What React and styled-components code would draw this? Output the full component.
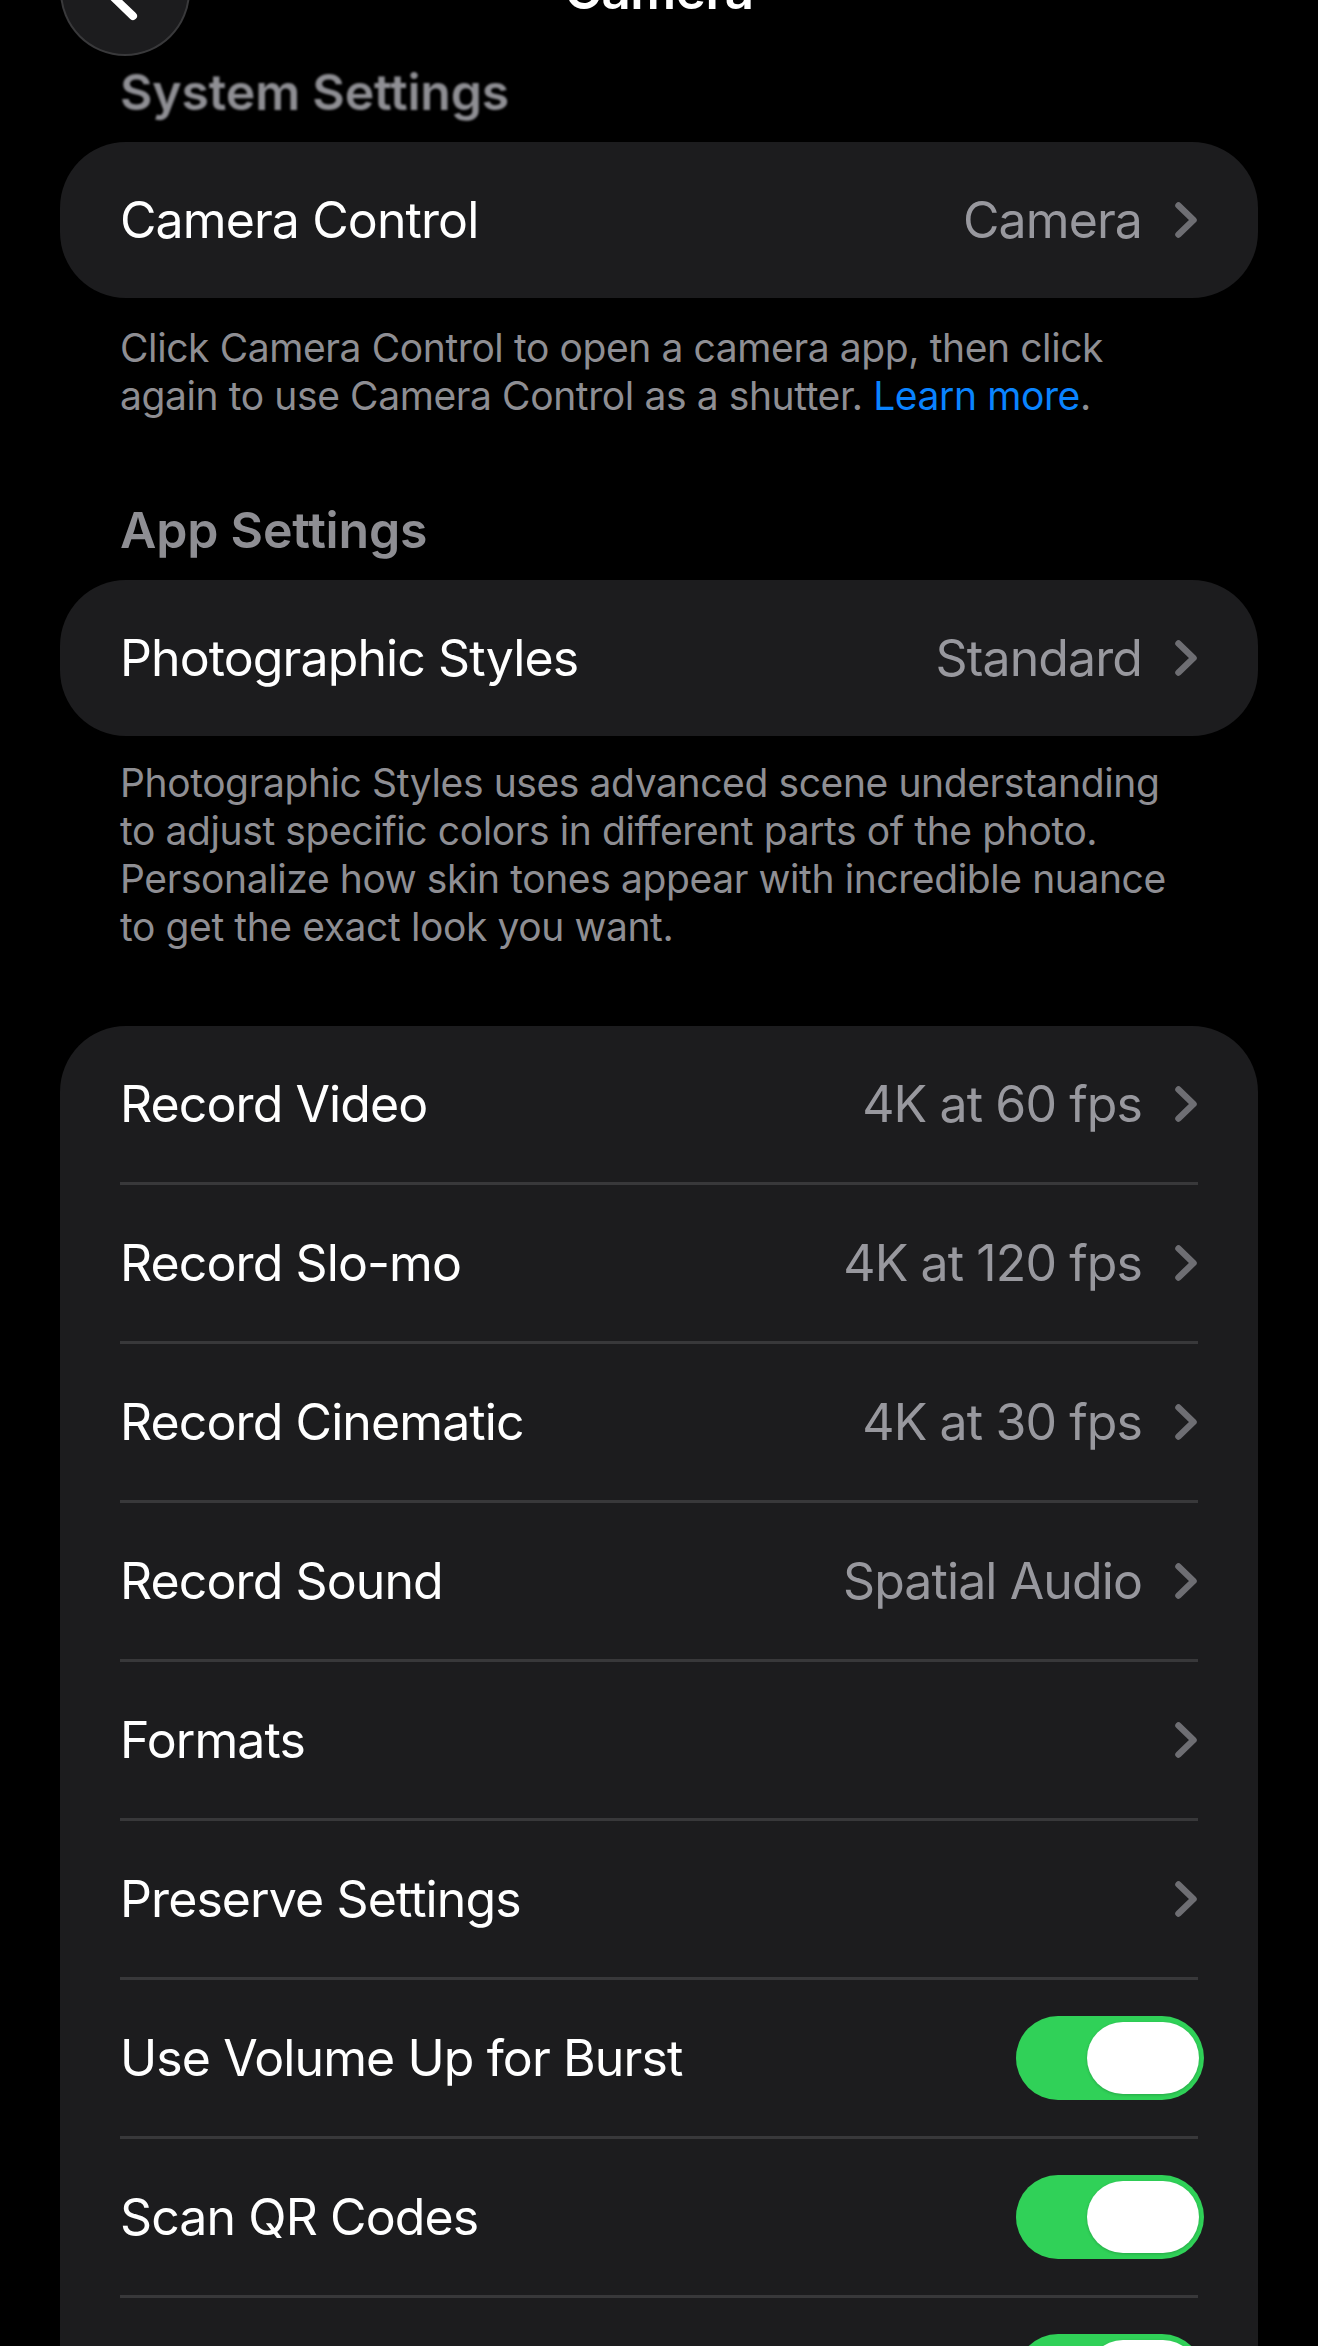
import React from "react";
import styled, { createGlobalStyle } from "styled-components";

const GlobalStyle = createGlobalStyle`
  html, body {
    margin: 0;
    padding: 0;
    background: #000;
  }
  body {
    font-family: Inter, "Noto Sans", "Liberation Sans", sans-serif;
    color: #fff;
    -webkit-font-smoothing: antialiased;
  }
`;

const sections = [
  {
    header: "System Settings",
    blurred: true,
    rows: [{ label: "Camera Control", value: "Camera", chevron: true }],
    footer: [
      "Click Camera Control to open a camera app, then click",
      "again to use Camera Control as a shutter.",
    ],
    link: "Learn more",
  },
  {
    header: "App Settings",
    rows: [{ label: "Photographic Styles", value: "Standard", chevron: true }],
    footer: [
      "Photographic Styles uses advanced scene understanding",
      "to adjust specific colors in different parts of the photo.",
      "Personalize how skin tones appear with incredible nuance",
      "to get the exact look you want.",
    ],
  },
  {
    rows: [
      { label: "Record Video", value: "4K at 60 fps", chevron: true },
      { label: "Record Slo-mo", value: "4K at 120 fps", chevron: true },
      { label: "Record Cinematic", value: "4K at 30 fps", chevron: true },
      { label: "Record Sound", value: "Spatial Audio", chevron: true },
      { label: "Formats", chevron: true },
      { label: "Preserve Settings", chevron: true },
      { label: "Use Volume Up for Burst", toggle: true },
      { label: "Scan QR Codes", toggle: true },
      { label: "Show Detected Text", toggle: true },
    ],
  },
];

const ChevronRight = () => (
  <ChevronSvg viewBox="0 0 22 36">
    <path d="M3.5 3.5 L18.5 18 L3.5 32.5" />
  </ChevronSvg>
);

const App = () => {
  return (
    <>
      <GlobalStyle />
      <Page>
        <NavBar>
          <BackButton>
            <svg viewBox="0 0 130 130" width="130" height="130">
              <path
                d="M73 40 L47 65 L73 90"
                fill="none"
                stroke="#fff"
                strokeWidth="8"
                strokeLinecap="round"
                strokeLinejoin="round"
              />
            </svg>
          </BackButton>
          <Title>Camera</Title>
          <span />
        </NavBar>

        {sections.map((section, i) => (
          <Section key={i} $first={i === 0} $last={i === sections.length - 1}>
            {section.header && (
              <SectionHeader $blurred={section.blurred}>{section.header}</SectionHeader>
            )}
            <Card>
              {section.rows.map((row, j) => (
                <Row key={row.label}>
                  <RowInner $divided={j > 0}>
                    <Label>{row.label}</Label>
                    <Trailing>
                      {row.value && <Value>{row.value}</Value>}
                      {row.chevron && <ChevronRight />}
                      {row.toggle && (
                        <Toggle>
                          <Knob />
                        </Toggle>
                      )}
                    </Trailing>
                  </RowInner>
                </Row>
              ))}
            </Card>
            {section.footer && (
              <Footer $gap={i === 0 ? 26 : 23}>
                {section.footer.map((line, k) => (
                  <React.Fragment key={k}>
                    {line}
                    {k === section.footer.length - 1 && section.link && (
                      <>
                        {" "}
                        <Link>{section.link}</Link>.
                      </>
                    )}
                    {k < section.footer.length - 1 && <br />}
                  </React.Fragment>
                ))}
              </Footer>
            )}
          </Section>
        ))}
      </Page>
    </>
  );
};

export default App;

const Page = styled.div`
  width: 1318px;
  min-height: 2346px;
  box-sizing: border-box;
  padding: 0 60px 200px;
  display: flex;
  flex-direction: column;
  background: #000;
  overflow: hidden;
`;

const NavBar = styled.div`
  margin-top: -74px;
  height: 130px;
  display: grid;
  grid-template-columns: 130px 1fr 130px;
  align-items: center;
`;

const BackButton = styled.div`
  width: 130px;
  height: 130px;
  border-radius: 50%;
  box-sizing: border-box;
  background: #1c1c1e;
  border: 2px solid rgba(255, 255, 255, 0.13);
  display: flex;
  align-items: center;
  justify-content: center;
  overflow: hidden;

  svg {
    flex-shrink: 0;
  }
`;

const Title = styled.div`
  text-align: center;
  font-size: 51px;
  font-weight: 600;
  line-height: 62px;
  letter-spacing: -0.5px;
  color: #fff;
`;

const Section = styled.div`
  display: flex;
  flex-direction: column;
  margin-top: ${(p) => (p.$first ? "8px" : p.$last ? "75px" : "82px")};
`;

const SectionHeader = styled.div`
  padding-left: 60px;
  margin-bottom: 22px;
  font-size: 50px;
  line-height: 56px;
  font-weight: 600;
  letter-spacing: -0.2px;
  color: #8e8e93;
  filter: ${(p) => (p.$blurred ? "blur(1.2px)" : "none")};
`;

const Card = styled.div`
  background: #1c1c1e;
  border-radius: 66px;
  overflow: hidden;
`;

const Row = styled.div`
  padding: 0 60px;
`;

const RowInner = styled.div`
  height: 156px;
  display: flex;
  align-items: center;
  justify-content: space-between;
  border-top: ${(p) => (p.$divided ? "3px solid #38383a" : "none")};
`;

const Label = styled.div`
  font-size: 50px;
  line-height: 62px;
  letter-spacing: -0.9px;
  color: #fff;
`;

const Trailing = styled.div`
  display: flex;
  align-items: center;
  gap: 33px;
`;

const Value = styled.div`
  font-size: 50px;
  line-height: 62px;
  letter-spacing: -0.9px;
  color: #98989e;
`;

const ChevronSvg = styled.svg`
  width: 22px;
  height: 36px;
  flex-shrink: 0;
  margin-right: 1px;

  path {
    fill: none;
    stroke: #6e6e73;
    stroke-width: 6.5;
    stroke-linecap: round;
    stroke-linejoin: round;
  }
`;

const Toggle = styled.div`
  width: 188px;
  height: 84px;
  margin-right: -6px;
  border-radius: 42px;
  background: #30d158;
  display: flex;
  align-items: center;
  justify-content: flex-end;
  padding: 0 5px;
  box-sizing: border-box;
`;

const Knob = styled.div`
  width: 112px;
  height: 72px;
  border-radius: 36px;
  background: #fff;
  box-shadow: 0 1px 3px rgba(0, 0, 0, 0.2);
`;

const Footer = styled.div`
  margin-top: ${(p) => p.$gap}px;
  padding: 0 60px;
  font-size: 39px;
  line-height: 48px;
  letter-spacing: -0.4px;
  color: #8e8e93;
  white-space: nowrap;
`;

const Link = styled.span`
  color: #0a84ff;
`;
